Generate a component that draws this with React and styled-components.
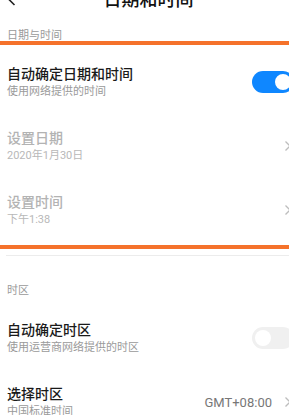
import React from "react";
import styled, { createGlobalStyle } from "styled-components";

const GlobalStyle = createGlobalStyle`
  html, body {
    margin: 0;
    padding: 0;
    overflow: hidden;
    background: #fff;
  }
`;

const Page = styled.div`
  width: 297px;
  font-family: Roboto, "Noto Sans CJK SC", sans-serif;
  color: #1a1a1a;
`;

const Header = styled.div`
  height: 36px;
  margin-top: -18px;
  display: grid;
  grid-template-columns: 40px 1fr 40px;
  align-items: center;
`;

const BackButton = styled.div`
  display: flex;
  align-items: center;
  padding-left: 7px;
  margin-top: -3px;
`;

const HeaderTitle = styled.div`
  text-align: center;
  font-size: 18px;
  font-weight: 500;
  line-height: 36px;
  color: #111;
`;

const SectionLabel = styled.div`
  padding: ${(p) => p.$top}px 7px 0;
  margin-bottom: ${(p) => p.$bottom || 0}px;
  font-size: 11px;
  line-height: 11px;
  color: #9a9a9a;
`;

const Framed = styled.section`
  border-top: 4px solid #f5722b;
  border-bottom: 4px solid #f5722b;
  padding: 5px 0 3px;
`;

const Row = styled.div`
  height: 64px;
  display: flex;
  align-items: center;
  justify-content: space-between;
  padding: 0 3px 0 7px;
`;

const TextBlock = styled.div`
  display: flex;
  flex-direction: column;
  gap: 2px;
`;

const Title = styled.div`
  font-size: 14px;
  line-height: 18px;
  font-weight: 500;
  color: ${(p) => (p.$disabled ? "#b3b3b3" : "#1a1a1a")};
`;

const Sub = styled.div`
  font-size: 11px;
  line-height: 14px;
  color: ${(p) => (p.$disabled ? "#b8b8b8" : "#9a9a9a")};
`;

const Toggle = styled.div`
  width: 42px;
  height: 22px;
  box-sizing: border-box;
  border-radius: 11px;
  padding: 3px;
  display: flex;
  align-items: center;
  justify-content: ${(p) => (p.$on ? "flex-end" : "flex-start")};
  background: ${(p) => (p.$on ? "#0f87ff" : "#f0f0f0")};
`;

const Knob = styled.div`
  width: 16px;
  height: 16px;
  border-radius: 50%;
  background: #fff;
`;

const Trailing = styled.div`
  display: flex;
  align-items: center;
  gap: 12px;
`;

const Value = styled.span`
  font-size: 13px;
  color: #777;
`;

const Divider = styled.div`
  height: 1px;
  background: #ececec;
  margin: 6px 0 0 6px;
`;

const Chevron = () => (
  <svg width="8" height="12" viewBox="0 0 8 12" style={{ marginRight: 2 }}>
    <path d="M1.5 1.5 L6 6 L1.5 10.5" fill="none" stroke="#bdbdbd" strokeWidth="1.3" />
  </svg>
);

const BackArrow = () => (
  <svg width="9" height="14" viewBox="0 0 9 14">
    <path d="M7.5 1 L1.5 7 L7.5 13" fill="none" stroke="#222" strokeWidth="1.6" />
  </svg>
);

const SettingRow = ({ title, sub, disabled, children }) => (
  <Row>
    <TextBlock>
      <Title $disabled={disabled}>{title}</Title>
      <Sub $disabled={disabled}>{sub}</Sub>
    </TextBlock>
    {children}
  </Row>
);

export default function App() {
  return (
    <Page>
      <GlobalStyle />
      <Header>
        <BackButton>
          <BackArrow />
        </BackButton>
        <HeaderTitle>日期和时间</HeaderTitle>
        <div />
      </Header>

      <SectionLabel $top={12}>日期与时间</SectionLabel>
      <Framed>
        <SettingRow title="自动确定日期和时间" sub="使用网络提供的时间">
          <Toggle $on>
            <Knob />
          </Toggle>
        </SettingRow>
        <SettingRow title="设置日期" sub="2020年1月30日" disabled>
          <Chevron />
        </SettingRow>
        <SettingRow title="设置时间" sub="下午1:38" disabled>
          <Chevron />
        </SettingRow>
      </Framed>
      <Divider />

      <SectionLabel $top={29} $bottom={10}>时区</SectionLabel>
      <SettingRow title="自动确定时区" sub="使用运营商网络提供的时区">
        <Toggle>
          <Knob />
        </Toggle>
      </SettingRow>
      <SettingRow title="选择时区" sub="中国标准时间">
        <Trailing>
          <Value>GMT+08:00</Value>
          <Chevron />
        </Trailing>
      </SettingRow>
    </Page>
  );
}
